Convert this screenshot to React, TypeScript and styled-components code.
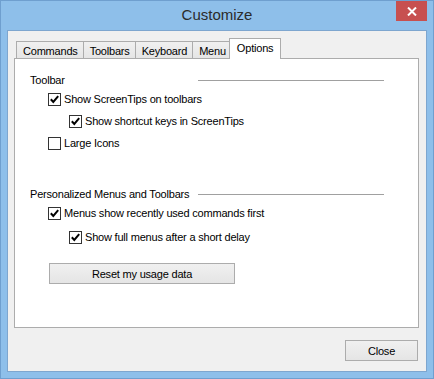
import styled, { createGlobalStyle } from "styled-components";

const frameBlue = "#8ebfea";
const frameEdge = "#6f9fcf";
const faceGray = "#f0f0f0";
const lineGray = "#acacac";

const GlobalStyle = createGlobalStyle`
  html, body {
    margin: 0;
    padding: 0;
    background: ${frameBlue};
  }
  body {
    font-family: "Liberation Sans", Arial, sans-serif;
    font-size: 11px;
    letter-spacing: -0.2px;
    color: #000;
  }
`;

const Window = styled.div`
  box-sizing: border-box;
  width: 434px;
  height: 379px;
  display: flex;
  flex-direction: column;
  background: ${frameBlue};
  border: 1px solid ${frameEdge};
`;

const TitleBar = styled.div`
  height: 29px;
  display: grid;
  grid-template-columns: 1fr auto 1fr;
  align-items: start;
`;

const Title = styled.div`
  grid-column: 2;
  padding-top: 5px;
  font-size: 15px;
  letter-spacing: 0;
  color: #2b2b2b;
`;

const CloseBox = styled.div`
  grid-column: 3;
  justify-self: end;
  width: 31px;
  height: 20px;
  margin-right: 6px;
  background: #c75050;
  display: flex;
  align-items: center;
  justify-content: center;
`;

const Client = styled.div`
  box-sizing: border-box;
  width: 420px;
  height: 342px;
  margin-left: 6px;
  background: ${faceGray};
  border: 1px solid #7ea6cf;
  padding: 7px 7px 0 6px;
  display: flex;
  flex-direction: column;
`;

const TabStrip = styled.div`
  display: flex;
  align-items: flex-end;
  height: 21px;
  padding-left: 2px;
  margin-bottom: -1px;
  position: relative;
  z-index: 1;
`;

const Tab = styled.div<{ $active?: boolean }>`
  box-sizing: border-box;
  height: ${(p) => (p.$active ? 21 : 18)}px;
  padding: ${(p) => (p.$active ? "2px 7px 0" : "2px 5px 0 6px")};
  margin-left: ${(p) => (p.$active ? "-3px" : "-1px")};
  margin-right: ${(p) => (p.$active ? "-2px" : "0")};
  border: 1px solid ${lineGray};
  border-bottom: ${(p) => (p.$active ? "none" : `1px solid ${lineGray}`)};
  background: ${(p) =>
    p.$active ? "#fff" : "linear-gradient(#f0f0f0, #e5e5e5)"};
  line-height: 14px;
  white-space: nowrap;
  position: relative;
  z-index: ${(p) => (p.$active ? 2 : 1)};
  &:first-child {
    margin-left: 0;
  }
`;

const Panel = styled.div`
  box-sizing: border-box;
  height: 270px;
  background: #fff;
  border: 1px solid ${lineGray};
  padding: 13px 0 0 15px;
  display: flex;
  flex-direction: column;
`;

const GroupHeader = styled.div<{ $top?: number }>`
  display: grid;
  grid-template-columns: 168px 186px;
  align-items: center;
  height: 16px;
  margin-top: ${(p) => p.$top ?? 0}px;
`;

const Rule = styled.div`
  height: 1px;
  background: #a0a0a0;
`;

const CheckRow = styled.label<{ $indent: number; $top?: number }>`
  display: flex;
  align-items: center;
  height: 22px;
  padding-left: ${(p) => p.$indent}px;
  margin-top: ${(p) => p.$top ?? 0}px;
  white-space: nowrap;
`;

const Box = styled.span`
  box-sizing: border-box;
  width: 13px;
  height: 13px;
  border: 1px solid #333;
  background: #fff;
  display: flex;
  align-items: center;
  justify-content: center;
  margin-right: 3px;
`;

const PushButton = styled.button<{ $width: number }>`
  box-sizing: border-box;
  width: ${(p) => p.$width}px;
  height: 21px;
  padding: 0;
  border: 1px solid ${lineGray};
  background: linear-gradient(#f0f0f0, #e5e5e5);
  font-family: "Liberation Sans", Arial, sans-serif;
  font-size: 11px;
  letter-spacing: -0.2px;
  color: #000;
`;

const ResetButton = styled(PushButton)`
  margin: 15px 0 0 19px;
`;

const Footer = styled.div`
  display: flex;
  justify-content: flex-end;
  padding: 12px 1px 0 0;
`;

interface CheckProps {
  label: string;
  checked: boolean;
  indent: number;
  top?: number;
}

const Check = ({ label, checked, indent, top }: CheckProps) => (
  <CheckRow $indent={indent} $top={top}>
    <Box>
      {checked && (
        <svg width="11" height="11" viewBox="0 0 11 11">
          <path d="M1.8 5.2 L4.3 7.9 L9.2 2.2" fill="none" stroke="#000" strokeWidth="2" />
        </svg>
      )}
    </Box>
    {label}
  </CheckRow>
);

const tabs = ["Commands", "Toolbars", "Keyboard", "Menu", "Options"];

export default function App() {
  return (
    <>
      <GlobalStyle />
      <Window>
        <TitleBar>
          <Title>Customize</Title>
          <CloseBox>
            <svg width="10" height="9" viewBox="0 0 10 9">
              <path d="M1 0.5 L9 8.5 M9 0.5 L1 8.5" stroke="#fff" strokeWidth="2" />
            </svg>
          </CloseBox>
        </TitleBar>
        <Client>
          <TabStrip>
            {tabs.map((t) => (
              <Tab key={t} $active={t === "Options"}>
                {t}
              </Tab>
            ))}
          </TabStrip>
          <Panel>
            <GroupHeader>
              <span>Toolbar</span>
              <Rule />
            </GroupHeader>
            <Check label="Show ScreenTips on toolbars" checked indent={18} />
            <Check label="Show shortcut keys in ScreenTips" checked indent={39} />
            <Check label="Large Icons" checked={false} indent={18} />
            <GroupHeader $top={32}>
              <span>Personalized Menus and Toolbars</span>
              <Rule />
            </GroupHeader>
            <Check label="Menus show recently used commands first" checked indent={18} />
            <Check label="Show full menus after a short delay" checked indent={39} top={2} />
            <ResetButton $width={186}>Reset my usage data</ResetButton>
          </Panel>
          <Footer>
            <PushButton $width={73}>Close</PushButton>
          </Footer>
        </Client>
      </Window>
    </>
  );
}
